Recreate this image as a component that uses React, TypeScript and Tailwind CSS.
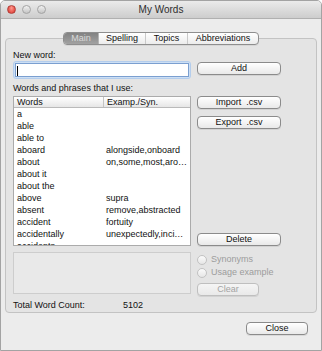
import React from "react";

function Btn({
  children,
  className = "",
  disabled = false,
}: {
  children: React.ReactNode;
  className?: string;
  disabled?: boolean;
}) {
  const tone = disabled
    ? "border-[#bfbfbf] text-[#a3a3a3] from-[#f5f5f5] to-[#e9e9e9]"
    : "border-[#8b8b8b] text-[#111] from-white to-[#e9e9e9]";
  return (
    <div
      className={`flex items-center justify-center h-[13px] rounded-[4px] border bg-linear-to-b ${tone} text-[9px] leading-none shadow-[0_1px_0_rgba(0,0,0,0.08)] ${className}`}
    >
      {children}
    </div>
  );
}

const rows: [string, string][] = [
  ["a", ""],
  ["able", ""],
  ["able to", ""],
  ["aboard", "alongside,onboard"],
  ["about", "on,some,most,aro…"],
  ["about it", ""],
  ["about the", ""],
  ["above", "supra"],
  ["absent", "remove,abstracted"],
  ["accident", "fortuity"],
  ["accidentally", "unexpectedly,inci…"],
  ["accidents", ""],
];

function Radio({ label }: { label: string }) {
  return (
    <div className="h-[13px] flex items-center gap-[4px]">
      <div className="w-[10px] h-[10px] rounded-full border border-[#c2c2c2] bg-linear-to-b from-[#fbfbfb] to-[#e6e6e6]" />
      <span className="text-[#9c9c9c] leading-none">{label}</span>
    </div>
  );
}

export default function App() {
  return (
    <div className="w-[322px] h-[351px] bg-white font-['Liberation_Sans',Arial,sans-serif] text-[9px] text-[#111]">
      <div className="w-full h-full flex flex-col border border-[#a3a3a3] rounded-t-[5px] bg-[#ececec] overflow-hidden">
        {/* Title bar */}
        <div className="relative h-[18px] shrink-0 flex items-center justify-center bg-linear-to-b from-[#ebebeb] to-[#cdcdcd] border-b border-[#b0b0b0]">
          <div className="absolute left-[6px] top-[4px] flex gap-[6px]">
            <div className="w-[9px] h-[9px] rounded-full border border-[#b0413b] bg-radial-[at_50%_30%] from-[#ff9a8f] to-[#d92a23]" />
            <div className="w-[9px] h-[9px] rounded-full border border-[#a3a3a3] bg-linear-to-b from-[#f2f2f2] to-[#c4c4c4]" />
            <div className="w-[9px] h-[9px] rounded-full border border-[#a3a3a3] bg-linear-to-b from-[#f2f2f2] to-[#c4c4c4]" />
          </div>
          <span className="text-[10px] leading-none text-[#2e2e2e]">My Words</span>
        </div>

        {/* Body */}
        <div className="flex-1 flex flex-col px-[4px] pt-[19px]">
          <div className="relative border border-[#c3c3c3] rounded-[4px] bg-[#e4e4e4] pl-[7px] pt-[11px] pb-[1px]">
            {/* Tabs */}
            <div className="absolute top-[-7px] left-1/2 -translate-x-1/2 flex h-[13px] rounded-[4px] border border-[#8e8e8e] bg-linear-to-b from-white to-[#ececec] overflow-hidden shadow-[0_1px_0_rgba(0,0,0,0.06)]">
              <div className="w-[34px] flex items-center justify-center bg-linear-to-b from-[#828282] to-[#a2a2a2] text-[#d9d9d9] leading-none">
                Main
              </div>
              <div className="w-[47px] flex items-center justify-center border-l border-[#b5b5b5] leading-none">
                Spelling
              </div>
              <div className="w-[42px] flex items-center justify-center border-l border-[#c9c9c9] leading-none">
                Topics
              </div>
              <div className="w-[71px] flex items-center justify-center border-l border-[#c9c9c9] leading-none">
                Abbreviations
              </div>
            </div>

            <div className="leading-[11px]">New word:</div>

            <div className="flex gap-[6px] items-start">
              <div className="w-[178px] h-[18px] rounded-[3px] border border-[#b4cdec] bg-[#cddff4] p-[1px]">
                <div className="relative h-full border border-[#7b9fd0] bg-white">
                  <div className="absolute left-[1px] top-[2px] w-px h-[10px] bg-black" />
                </div>
              </div>
              <Btn className="w-[84px] mt-[1px]">Add</Btn>
            </div>

            <div className="mt-[4px] leading-[11px]">Words and phrases that I use:</div>

            <div className="flex gap-[6px] mt-[2px]">
              <div className="w-[178px] h-[150px] border border-[#ababab] bg-white overflow-hidden flex flex-col">
                <div className="h-[11px] shrink-0 flex bg-linear-to-b from-white to-[#e6e6e6] border-b border-[#bababa]">
                  <div className="w-[89px] pl-[3px] flex items-center leading-none">Words</div>
                  <div className="flex-1 pl-[3px] flex items-center border-l border-[#c4c4c4] leading-none">
                    Examp./Syn.
                  </div>
                </div>
                {rows.map(([w, s]) => (
                  <div key={w} className="h-[12px] shrink-0 flex items-center leading-none">
                    <div className="w-[89px] pl-[3px] whitespace-nowrap">{w}</div>
                    <div className="flex-1 pl-[3px] whitespace-nowrap">{s}</div>
                  </div>
                ))}
              </div>
              <div className="w-[84px] flex flex-col">
                <Btn>Import&nbsp;&nbsp;.csv</Btn>
                <Btn className="mt-[7px]">Export&nbsp;&nbsp;.csv</Btn>
                <Btn className="mt-auto">Delete</Btn>
              </div>
            </div>

            <div className="flex gap-[6px] mt-[6px]">
              <div className="w-[178px] h-[42px] border border-[#cdcdcd] bg-[#e9e9e9]" />
              <div className="flex flex-col pt-[1px]">
                <Radio label="Synonyms" />
                <Radio label="Usage example" />
                <Btn disabled className="w-[62px] mt-[4px]">
                  Clear
                </Btn>
              </div>
            </div>

            <div className="flex mt-[4px] leading-[11px]">
              <span className="w-[110px]">Total Word Count:</span>
              <span>5102</span>
            </div>
          </div>

          <div className="flex justify-end mt-[9px] pr-[9px]">
            <Btn className="w-[62px]">Close</Btn>
          </div>
        </div>
      </div>
    </div>
  );
}
